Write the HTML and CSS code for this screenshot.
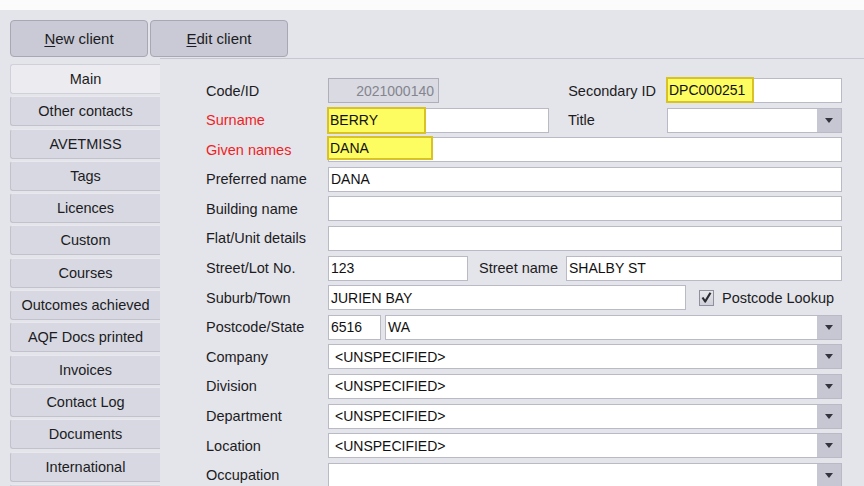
FILE: index.html
```html
<!DOCTYPE html>
<html lang="en">
<head>
<meta charset="utf-8">
<title>Client details</title>
<link rel="stylesheet" href="styles.css">
</head>
<body>
<div class="topstrip"></div>
<div class="toolbar">
  <button class="btn"><u>N</u>ew client</button>
  <button class="btn"><u>E</u>dit client</button>
</div>
<div class="workspace">
  <nav class="tabs">
    <div class="tab active">Main</div>
    <div class="tab">Other contacts</div>
    <div class="tab">AVETMISS</div>
    <div class="tab">Tags</div>
    <div class="tab">Licences</div>
    <div class="tab">Custom</div>
    <div class="tab">Courses</div>
    <div class="tab">Outcomes achieved</div>
    <div class="tab">AQF Docs printed</div>
    <div class="tab">Invoices</div>
    <div class="tab">Contact Log</div>
    <div class="tab">Documents</div>
    <div class="tab">International</div>
    <div class="tab"></div>
  </nav>
  <section class="page">
    <div class="row">
      <span class="lbl">Code/ID</span>
      <div class="field disabled w-code"><span class="val right">2021000140</span></div>
      <span class="lbl-mid sec">Secondary ID</span>
      <div class="field w-side"><span class="hl hl-sec">DPC000251</span></div>
    </div>
    <div class="row">
      <span class="lbl req">Surname</span>
      <div class="field w-surname"><span class="hl hl-sur">BERRY</span></div>
      <span class="lbl-mid title">Title</span>
      <div class="field combo w-side"><span class="val"></span><span class="drop"><i class="arrow"></i></span></div>
    </div>
    <div class="row">
      <span class="lbl req">Given names</span>
      <div class="field grow"><span class="hl hl-given">DANA</span></div>
    </div>
    <div class="row">
      <span class="lbl">Preferred name</span>
      <div class="field grow"><span class="val">DANA</span></div>
    </div>
    <div class="row">
      <span class="lbl">Building name</span>
      <div class="field grow"></div>
    </div>
    <div class="row">
      <span class="lbl">Flat/Unit details</span>
      <div class="field grow"></div>
    </div>
    <div class="row">
      <span class="lbl">Street/Lot No.</span>
      <div class="field w-lot"><span class="val">123</span></div>
      <span class="lbl-inline street">Street name</span>
      <div class="field grow"><span class="val">SHALBY ST</span></div>
    </div>
    <div class="row">
      <span class="lbl">Suburb/Town</span>
      <div class="field w-suburb"><span class="val">JURIEN BAY</span></div>
      <label class="check">
        <span class="box"><svg width="13" height="13" viewBox="0 0 13 13"><path d="M2.5 6.5 L5.2 10.5 L10.5 1.8" fill="none" stroke="#2b2b33" stroke-width="2.2" stroke-linejoin="round"/></svg></span>
        <span>Postcode Lookup</span>
      </label>
    </div>
    <div class="row">
      <span class="lbl">Postcode/State</span>
      <div class="field w-pc"><span class="val">6516</span></div>
      <div class="field combo grow gap-l"><span class="val">WA</span><span class="drop"><i class="arrow"></i></span></div>
    </div>
    <div class="row">
      <span class="lbl">Company</span>
      <div class="field combo grow"><span class="val pad">&lt;UNSPECIFIED&gt;</span><span class="drop"><i class="arrow"></i></span></div>
    </div>
    <div class="row">
      <span class="lbl">Division</span>
      <div class="field combo grow"><span class="val pad">&lt;UNSPECIFIED&gt;</span><span class="drop"><i class="arrow"></i></span></div>
    </div>
    <div class="row">
      <span class="lbl">Department</span>
      <div class="field combo grow"><span class="val pad">&lt;UNSPECIFIED&gt;</span><span class="drop"><i class="arrow"></i></span></div>
    </div>
    <div class="row">
      <span class="lbl">Location</span>
      <div class="field combo grow"><span class="val pad">&lt;UNSPECIFIED&gt;</span><span class="drop"><i class="arrow"></i></span></div>
    </div>
    <div class="row">
      <span class="lbl">Occupation</span>
      <div class="field combo grow"><span class="val"></span><span class="drop"><i class="arrow"></i></span></div>
    </div>
  </section>
</div>
</body>
</html>
```

FILE: styles.css
```css
* { box-sizing: border-box; }

html, body {
  margin: 0;
  height: 100%;
  overflow: hidden;
}

body {
  background: #e4e4eb;
  font-family: "Liberation Sans", Arial, sans-serif;
  font-size: 14.5px;
  color: #1c1c22;
}

.topstrip {
  height: 10px;
  background: #fbfbfc;
}

/* toolbar buttons */
.toolbar {
  display: flex;
  gap: 2px;
  padding: 10px 0 0 10px;
}

.btn {
  width: 138px;
  height: 37px;
  background: #c9cad6;
  border: 1px solid #a7a8b4;
  border-radius: 4px;
  font: inherit;
  font-size: 15px;
  color: #1c1c22;
  padding: 0;
}

.btn u { text-underline-offset: 2px; }

/* left tab strip + page */
.workspace {
  display: flex;
  margin-top: 1px;
}

.tabs {
  width: 150px;
  margin-left: 10px;
  padding-top: 6px;
  display: flex;
  flex-direction: column;
  gap: 2.3px;
  flex: none;
}

.tab {
  height: 30px;
  flex: none;
  background: #d7d8e2;
  border: 1px solid #c1c2cc;
  border-right: none;
  border-top-color: #e8e8ee;
  border-radius: 3px 0 0 3px;
  display: flex;
  align-items: center;
  justify-content: center;
  font-size: 14.5px;
  color: #1c1c22;
}

.tab.active {
  background: #ebebf0;
  border-color: #cfd0d9;
}

.page {
  flex: 1;
  border-top: 1px solid #c6c7d0;
  padding: 19px 22px 0 46px;
  display: flex;
  flex-direction: column;
  gap: 4.6px;
}

.row {
  display: flex;
  align-items: center;
  height: 25px;
  flex: none;
}

.lbl {
  width: 122px;
  flex: none;
  white-space: nowrap;
}

.lbl.req { color: #f01e1e; }

.lbl-mid {
  flex: 1;
  white-space: nowrap;
}

.lbl-mid.sec { text-align: right; padding-right: 11px; }
.lbl-mid.title { padding-left: 19px; }

.lbl-inline {
  white-space: nowrap;
  flex: none;
}

.lbl-inline.street { width: 98px; padding-left: 11px; }

/* text boxes */
.field {
  height: 25px;
  background: #fff;
  border: 1px solid #b9bac5;
  display: flex;
  align-items: stretch;
  font-size: 14px;
  color: #111;
  flex: none;
}

.field.grow { flex: 1; }
.field.gap-l { margin-left: 4px; }

.w-code { width: 111px; }
.w-side { width: 175px; }
.w-surname { width: 221px; }
.w-lot { width: 140px; }
.w-suburb { width: 358px; }
.w-pc { width: 53px; }

.val {
  flex: 1;
  display: flex;
  align-items: center;
  padding-left: 2px;
  white-space: nowrap;
}

.val.pad { padding-left: 6px; }

.val.right {
  justify-content: flex-end;
  padding-right: 4px;
}

.field.disabled {
  background: #d9dae2;
  border-color: #aeafba;
  color: #84858e;
}

/* yellow highlight on matched values */
.hl {
  margin: -2px 0 -2px -2px;
  background: #fdfd62;
  border: 2px solid #d8c226;
  display: flex;
  align-items: center;
  padding-left: 1px;
  color: #111;
}

.hl-sec { width: 88px; margin-top: -2px; margin-bottom: -1px; }
.hl-sur { width: 99px; margin-top: -2px; margin-bottom: -2px; }
.hl-given { width: 106px; margin-top: -2px; margin-bottom: 1px; }

/* drop-down button */
.combo .drop {
  width: 24px;
  background: #c6c7d3;
  display: flex;
  align-items: center;
  justify-content: center;
}

.arrow {
  width: 0;
  height: 0;
  border-left: 4px solid transparent;
  border-right: 4px solid transparent;
  border-top: 5px solid #33343d;
}

/* checkbox */
.check {
  display: flex;
  align-items: center;
  gap: 8px;
  margin-left: 13px;
  white-space: nowrap;
}

.box {
  width: 15px;
  height: 16px;
  border: 1px solid #8f909d;
  background: linear-gradient(#e6e6ec, #cfd0d9);
  display: flex;
  align-items: center;
  justify-content: center;
}
```
